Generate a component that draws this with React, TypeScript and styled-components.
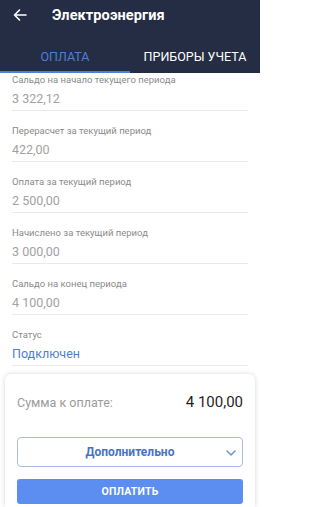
import React from 'react';
import styled, { createGlobalStyle } from 'styled-components';

const GlobalStyle = createGlobalStyle`
  html, body {
    margin: 0;
    padding: 0;
    background: #ffffff;
    font-family: Roboto, "Noto Sans", Arial, sans-serif;
  }
  * { box-sizing: border-box; }
`;

type Row = { label: string; value: string; accent?: boolean };

const rows: Row[] = [
  { label: 'Сальдо на начало текущего периода', value: '3 322,12' },
  { label: 'Перерасчет за текущий период', value: '422,00' },
  { label: 'Оплата за текущий период', value: '2 500,00' },
  { label: 'Начислено за текущий период', value: '3 000,00' },
  { label: 'Сальдо на конец периода', value: '4 100,00' },
  { label: 'Статус', value: 'Подключен', accent: true },
];

export default function App() {
  return (
    <>
      <GlobalStyle />
      <Screen>
        <Header>
          <TitleBar>
            <BackButton aria-label="Назад">
              <svg width="14" height="12" viewBox="0 0 14 12" fill="none">
                <path
                  d="M13 6H1.5M6.5 1L1.5 6l5 5"
                  stroke="#fff"
                  strokeWidth="1.6"
                  strokeLinecap="round"
                  strokeLinejoin="round"
                />
              </svg>
            </BackButton>
            <Title>Электроэнергия</Title>
          </TitleBar>
          <Tabs>
            <Tab $active>Оплата</Tab>
            <Tab>Приборы учета</Tab>
          </Tabs>
        </Header>

        <List>
          {rows.map((row) => (
            <Item key={row.label}>
              <Label>{row.label}</Label>
              <Value $accent={row.accent}>{row.value}</Value>
            </Item>
          ))}
        </List>

        <PayCard>
          <SumRow>
            <SumLabel>Сумма к оплате:</SumLabel>
            <SumValue>4 100,00</SumValue>
          </SumRow>
          <MoreButton type="button">
            <span>Дополнительно</span>
            <Chevron width="10" height="6" viewBox="0 0 10 6" fill="none">
              <path
                d="M1 1l4 4 4-4"
                stroke="#6f90cf"
                strokeWidth="1.5"
                strokeLinecap="round"
                strokeLinejoin="round"
              />
            </Chevron>
          </MoreButton>
          <PayButton type="button">Оплатить</PayButton>
        </PayCard>
      </Screen>
    </>
  );
}

const Screen = styled.div`
  width: 260px;
  height: 507px;
  overflow: hidden;
  display: flex;
  flex-direction: column;
  background: #fff;
`;

const Header = styled.header`
  background: #252d44;
  height: 73px;
  display: flex;
  flex-direction: column;
  flex-shrink: 0;
`;

const TitleBar = styled.div`
  height: 30px;
  display: flex;
  align-items: center;
  padding-left: 13px;
`;

const BackButton = styled.button`
  border: 0;
  background: none;
  padding: 0;
  width: 14px;
  height: 12px;
  display: flex;
  margin-right: 25px;
  cursor: pointer;
`;

const Title = styled.h1`
  margin: 0;
  color: #fff;
  font-size: 14.5px;
  font-weight: 700;
  letter-spacing: 0.1px;
`;

const Tabs = styled.nav`
  flex: 1;
  display: grid;
  grid-template-columns: 1fr 1fr;
`;

const Tab = styled.div<{ $active?: boolean }>`
  display: flex;
  align-items: center;
  justify-content: center;
  padding-top: 12px;
  text-transform: uppercase;
  font-size: 12.5px;
  color: ${({ $active }) => ($active ? '#4d7fd8' : '#ffffff')};
  border-bottom: 2px solid ${({ $active }) => ($active ? '#4d7fd8' : 'transparent')};
`;

const List = styled.div`
  padding: 0 12px;
  flex-shrink: 0;
`;

const Item = styled.div`
  padding: 14px 0 3px;
  border-bottom: 1px solid #e9e9e9;
  display: flex;
  flex-direction: column;
  gap: 5px;

  &:first-child {
    padding-top: 1px;
  }
`;

const Label = styled.div`
  font-size: 9.5px;
  line-height: 12px;
  color: #8a8a8a;
`;

const Value = styled.div<{ $accent?: boolean }>`
  font-size: 12.5px;
  line-height: 16px;
  color: ${({ $accent }) => ($accent ? '#4d7fcf' : '#a2a2a2')};
`;

const PayCard = styled.section`
  margin: 8px 5px 0;
  padding: 19px 12px 0;
  flex: 1;
  border-radius: 6px 6px 0 0;
  background: #fff;
  box-shadow: 0 0 5px rgba(0, 0, 0, 0.16);
  display: flex;
  flex-direction: column;
`;

const SumRow = styled.div`
  display: flex;
  justify-content: space-between;
  align-items: center;
  height: 18px;
  margin-bottom: 26px;
`;

const SumLabel = styled.span`
  font-size: 12.5px;
  color: #9b9b9b;
`;

const SumValue = styled.span`
  font-size: 15px;
  color: #1f1f1f;
`;

const MoreButton = styled.button`
  position: relative;
  height: 30px;
  width: 100%;
  border: 1px solid #a9bde0;
  border-radius: 4px;
  background: #fff;
  display: flex;
  align-items: center;
  justify-content: center;
  font-family: inherit;
  font-size: 12px;
  font-weight: 700;
  color: #4a72c4;
  margin-bottom: 12px;
`;

const Chevron = styled.svg`
  position: absolute;
  right: 6px;
  top: 12px;
`;

const PayButton = styled.button`
  height: 25px;
  width: 100%;
  border: 0;
  border-radius: 3px;
  background: #5b8ef0;
  color: #fff;
  font-family: inherit;
  font-size: 10.5px;
  font-weight: 700;
  text-transform: uppercase;
  letter-spacing: 0.2px;
`;
